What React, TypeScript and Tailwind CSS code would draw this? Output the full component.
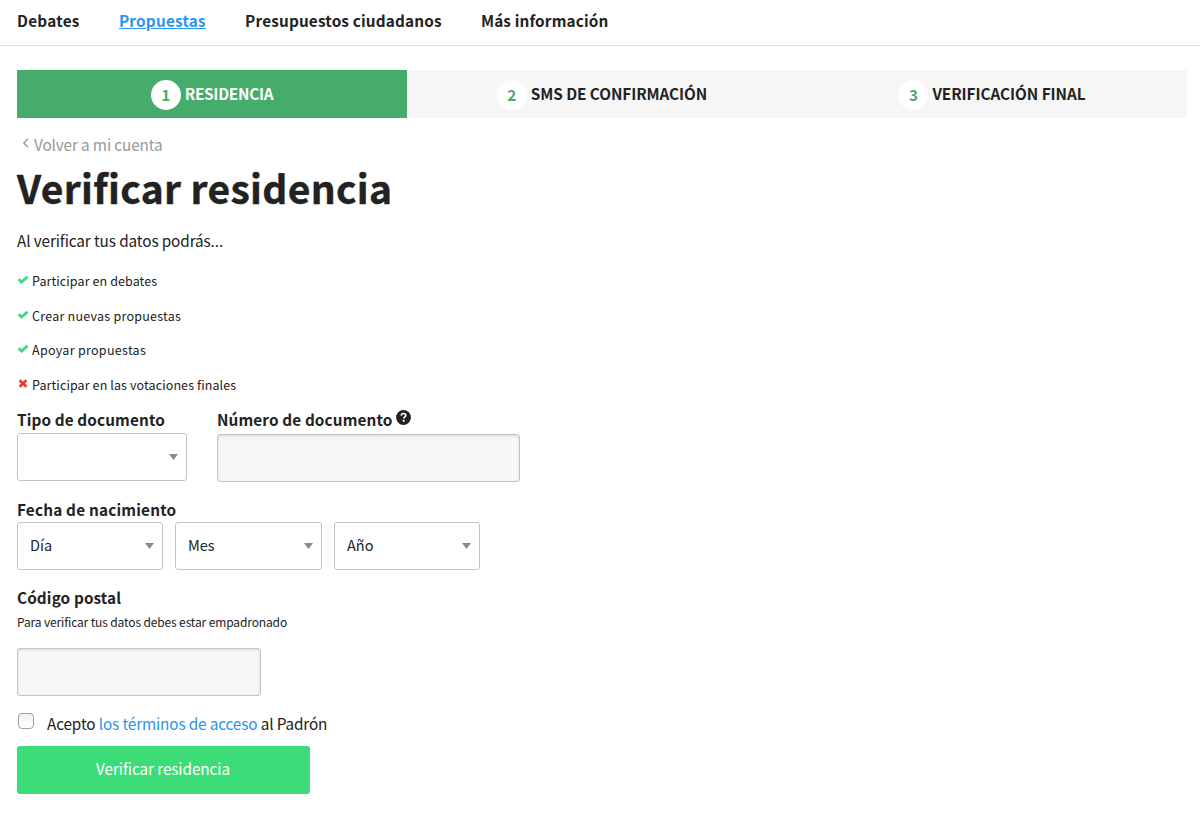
import type { ReactNode } from "react";

const steps = [
  { n: 1, label: "RESIDENCIA", active: true, tracking: "tracking-[-0.26px]" },
  { n: 2, label: "SMS DE CONFIRMACIÓN", active: false, tracking: "tracking-[-0.06px]" },
  { n: 3, label: "VERIFICACIÓN FINAL", active: false, tracking: "tracking-[-0.04px]" },
];

const benefits = [
  { text: "Participar en debates", ok: true, tracking: "tracking-[0.1px]" },
  { text: "Crear nuevas propuestas", ok: true, tracking: "tracking-[0.25px]" },
  { text: "Apoyar propuestas", ok: true, tracking: "tracking-[0.3px]" },
  { text: "Participar en las votaciones finales", ok: false, tracking: "tracking-[0.11px]" },
];

function Check() {
  return (
    <svg width="12" height="9" viewBox="0 0 12 9" className="block">
      <path d="M1.6 4.3 4.6 7.1 10.5 1.7" fill="none" stroke="#42d885" strokeWidth="2.9" />
    </svg>
  );
}

function Cross() {
  return (
    <svg width="12" height="9" viewBox="0 0 12 9" className="block">
      <path d="M2.6 1.2 9.4 7.8M9.4 1.2 2.6 7.8" fill="none" stroke="#ec3f24" strokeWidth="2.8" />
    </svg>
  );
}

function Select({ label, width, name }: { label: string; width: string; name: string }) {
  return (
    <div className={`relative h-12 ${width}`}>
      <select
        aria-label={name}
        className="block h-12 w-full appearance-none rounded-[3px] border border-[#c4c4c4] bg-white pb-[2px] pl-3 pr-8 text-[14.5px] leading-6 text-[#222]"
      >
        <option>{label}</option>
      </select>
      <svg width="9" height="6" viewBox="0 0 9 6" className="pointer-events-none absolute right-[9px] top-[21px]">
        <path d="M0 0h9L4.5 6z" fill="#8a8a8a" />
      </svg>
    </div>
  );
}

function Label({ children, tracking = "tracking-[0.13px]" }: { children: ReactNode; tracking?: string }) {
  return <div className={`flex h-6 items-center text-[15.3px] font-bold leading-6 ${tracking}`}>{children}</div>;
}

const inputStyle =
  "block h-12 rounded-[3px] border border-[#c4c4c4] bg-[#f7f7f7] shadow-[inset_0_1px_3px_rgba(0,0,0,0.12)]";

export default function App() {
  return (
    <div className="h-[820px] overflow-hidden whitespace-nowrap bg-white font-['Noto_Sans_CJK_SC','Noto_Sans',sans-serif] text-[15.3px] leading-6 text-[#222]">
      <nav className="flex h-[46px] gap-[39.3px] border-b border-[#dedede] pl-[17px] pt-2 font-bold tracking-[0.18px]">
        <a className="tracking-[0.26px]">Debates</a>
        <a className="tracking-[0.22px] text-[#2895f1] underline">Propuestas</a>
        <a>Presupuestos ciudadanos</a>
        <a className="tracking-[0.15px]">Más información</a>
      </nav>

      <main className="px-[17px] pt-6">
        <ol className="grid h-12 w-[1170px] grid-cols-3 bg-[#f6f6f6] font-bold">
          {steps.map((s) => (
            <li
              key={s.n}
              className={`flex justify-center gap-1 ${s.active ? "bg-[#45ac6b] text-white" : ""}`}
            >
              <span className="mt-[10px] h-[30px] w-[30px] rounded-full bg-white text-center leading-[28px] text-[#45ac6b]">
                {s.n}
              </span>
              <span className={`mt-[11px] ${s.tracking}`}>{s.label}</span>
            </li>
          ))}
        </ol>

        <a className="mt-[14px] flex h-6 tracking-[-0.12px] text-[#999]">
          <svg width="7" height="10" viewBox="0 0 7 10" className="ml-[5px] mr-[5px] mt-[6px]">
            <path d="M6 .7 1.8 5 6 9.3" fill="none" stroke="#999" strokeWidth="1.4" />
          </svg>
          Volver a mi cuenta
        </a>
        <h1 className="mt-[6px] h-[50px] text-[39px] font-bold leading-[50px] tracking-[0.33px] [-webkit-text-stroke:0.4px_#222]">
          Verificar residencia
        </h1>
        <p className="mt-4 tracking-[-0.11px]">Al verificar tus datos podrás...</p>

        <ul className="mt-[18px] flex flex-col gap-[14.6px] text-[12.5px] leading-[22px]">
          {benefits.map((b) => (
            <li key={b.text} className={`flex h-5 gap-[3px] ${b.tracking}`}>
              <span className="mt-[5px]">{b.ok ? <Check /> : <Cross />}</span>
              {b.text}
            </li>
          ))}
        </ul>

        <form>
          <div className="mt-[13px] flex gap-[30px]">
            <div>
              <Label>Tipo de documento</Label>
              <div className="mt-[2px]">
                <Select label="" name="Tipo de documento" width="w-[170px]" />
              </div>
            </div>
            <div>
              <Label>
                Número de documento
                <svg width="15" height="15" viewBox="0 0 15 15" className="-mt-[3px] ml-[3.5px]">
                  <circle cx="7.5" cy="7.5" r="7.4" fill="#222" />
                  <path d="M5.2 5.6C5.3 4.2 6.2 3.5 7.5 3.5c1.4 0 2.3.7 2.3 1.9 0 1.5-2 1.5-2 3.1" fill="none" stroke="#fff" strokeWidth="1.7" />
                  <path d="M6.7 9.8h2v1.9h-2z" fill="#fff" />
                </svg>
              </Label>
              <input aria-label="Número de documento" className={`mt-[3px] w-[303px] ${inputStyle}`} />
            </div>
          </div>

          <div className="mt-[15px]">
            <Label tracking="tracking-[0.2px]">Fecha de nacimiento</Label>
            <div className="mt-[1px] flex gap-3">
              <Select label="Día" name="Día" width="w-[146px]" />
              <Select label="Mes" name="Mes" width="w-[147px]" />
              <Select label="Año" name="Año" width="w-[146px]" />
            </div>
          </div>

          <div className="mt-[15px]">
            <Label>Código postal</Label>
            <p className="mt-[3px] h-5 text-[12px] leading-5 tracking-[-0.13px]">Para verificar tus datos debes estar empadronado</p>
            <input aria-label="Código postal" className={`mt-4 w-[244px] ${inputStyle}`} />
          </div>

          <label className="mt-[15px] flex h-6 tracking-[-0.13px]">
            <input
              type="checkbox"
              className="ml-[1px] mr-[13px] mt-[2px] h-4 w-4 appearance-none rounded-[4px] border border-[#a0a0a0] bg-linear-to-b from-[#f2f2f2] to-white"
            />
            <span>
              Acepto <a className="text-[#2895f1]">los términos de acceso</a> al Padrón
            </span>
          </label>

          <button
            type="button"
            className="mt-[11px] block h-12 w-[293px] rounded-[3px] bg-[#3cdc78] pb-[3px] pr-[1px] text-center tracking-[-0.08px] text-white"
          >
            Verificar residencia
          </button>
        </form>
      </main>
    </div>
  );
}
